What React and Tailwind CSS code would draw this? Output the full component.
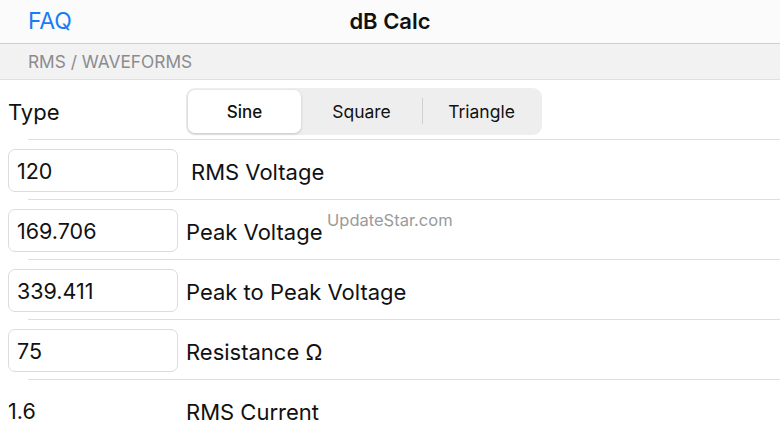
import React from "react";

const font = { fontFamily: "Inter, 'Noto Sans', 'Liberation Sans', sans-serif" };

function Row({ value, label, input = true, labelPad = "pl-[8px]", last = false }) {
  return (
    <div className="relative h-[60px] flex items-center">
      {input ? (
        <div className="ml-[8px] w-[170px] h-[43px] rounded-[7px] border border-[#dcdcdc] bg-white flex items-center pl-[8px] pt-[2px] text-[21.5px] text-[#111]">
          {value}
        </div>
      ) : (
        <div className="ml-[8px] w-[170px] pt-[3px] text-[21.5px] text-[#111]">{value}</div>
      )}
      <div className={`${labelPad} pt-[4px] text-[22px] text-[#111]`}>{label}</div>
      {!last && <div className="absolute left-[28px] right-0 bottom-0 h-px bg-[#dedede]" />}
    </div>
  );
}

export default function App() {
  return (
    <div className="w-[780px] h-[439px] bg-white overflow-hidden relative" style={font}>
      <div className="h-[44px] bg-[#fbfbfb] border-b border-[#cfcfcf] relative flex items-center">
        <div className="absolute left-[28px] text-[23px] text-[#1b7cf4] tracking-[-0.2px]">FAQ</div>
        <div className="w-full text-center text-[22px] font-semibold text-[#111]">dB Calc</div>
      </div>
      <div className="h-[36px] bg-[#f2f2f2] border-b border-[#e0e0e0] flex items-center pl-[28px] text-[17.3px] text-[#8b8b8f]">
        RMS / WAVEFORMS
      </div>
      <div className="relative h-[60px] flex items-center">
        <div className="ml-[8px] w-[178px] pt-[4px] text-[22px] text-[#111]">Type</div>
        <div className="mt-[2px] w-[356px] h-[47px] rounded-[9px] bg-[#eeeeef] flex items-center p-[2px] text-[17.5px] text-[#111]">
          <div className="w-[113px] h-full rounded-[7px] bg-white shadow-[0_1px_3px_rgba(0,0,0,0.18)] flex items-center justify-center pt-[3px] font-medium text-[17px]">
            Sine
          </div>
          <div className="flex-1 h-full flex items-center justify-center pt-[3px]">Square</div>
          <div className="w-px h-[26px] bg-[#cfcfd2]" />
          <div className="w-[117px] h-full flex items-center justify-center pt-[3px]">Triangle</div>
        </div>
        <div className="absolute left-[28px] right-0 bottom-0 h-px bg-[#dedede]" />
      </div>
      <Row value="120" label="RMS Voltage" labelPad="pl-[13px]" />
      <Row value="169.706" label="Peak Voltage" />
      <Row value="339.411" label="Peak to Peak Voltage" />
      <Row value="75" label="Resistance Ω" />
      <Row value="1.6" label="RMS Current" input={false} last />
      <div className="absolute left-[327px] top-[208px] text-[16.5px] text-[#9a9a9a]">UpdateStar.com</div>
    </div>
  );
}
